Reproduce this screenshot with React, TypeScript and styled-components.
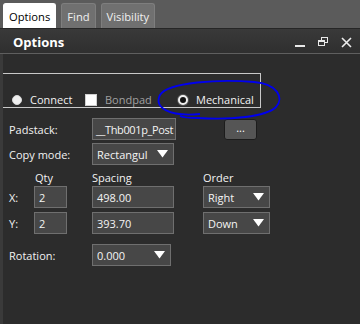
import React from "react";
import styled, { createGlobalStyle } from "styled-components";

const GlobalStyle = createGlobalStyle`
  html, body {
    margin: 0;
    padding: 0;
    background: #2c2c2c;
  }
  body {
    font-family: "Open Sans", "Noto Sans", "DejaVu Sans", sans-serif;
    font-size: 11px;
  }
`;

const Panel = styled.div`
  position: relative;
  width: 360px;
  height: 324px;
  display: flex;
  flex-direction: column;
  background: #2c2c2c;
  overflow: hidden;
`;

const TabBar = styled.div`
  display: flex;
  align-items: flex-end;
  gap: 5px;
  height: 29px;
  padding-left: 3px;
  box-sizing: border-box;
  background: #5b5b5b;
  border-bottom: 1px solid #262626;
`;

const Tab = styled.div<{ $active?: boolean }>`
  height: 25px;
  box-sizing: border-box;
  display: flex;
  align-items: center;
  padding: 0 5px;
  border-radius: 3px 3px 0 0;
  font-size: 11.2px;
  color: ${({ $active }) => ($active ? "#000" : "#f0f0f0")};
  background: ${({ $active }) => ($active ? "#ffffff" : "#707070")};
  border: 1px solid ${({ $active }) => ($active ? "#ffffff" : "#7e7e7e")};
  border-bottom: none;
`;

const Header = styled.div`
  height: 25px;
  box-sizing: border-box;
  display: flex;
  align-items: center;
  justify-content: space-between;
  padding: 2px 8px 0 13px;
  background: linear-gradient(#393939, #2f2f2f);
  border-bottom: 1px solid #5f5f5f;
  color: #ffffff;
  font-weight: 700;
  font-size: 13px;
`;

const HeaderIcons = styled.div`
  display: flex;
  align-items: center;
  gap: 12px;
`;

const Body = styled.div`
  flex: 1;
  display: flex;
  flex-direction: column;
  border-left: 3px solid #3a3a3a;
  padding-top: 19px;
  color: #f2f2f2;
`;

const GroupBox = styled.div`
  width: 258px;
  height: 35px;
  box-sizing: border-box;
  border: 1px solid #c9c9c9;
  border-left: none;
  display: flex;
  align-items: flex-end;
  padding: 0 0 0 9px;
  line-height: 14px;
`;

const Choice = styled.label<{ $muted?: boolean; $width: number }>`
  display: flex;
  align-items: center;
  gap: 8px;
  width: ${({ $width }) => $width}px;
  color: ${({ $muted }) => ($muted ? "#a0a0a0" : "#f2f2f2")};
  font-size: 11px;
`;

const Radio = styled.span<{ $checked?: boolean }>`
  width: 10px;
  height: 10px;
  border-radius: 50%;
  box-sizing: border-box;
  background: ${({ $checked }) => ($checked ? "#111" : "#f0f0f0")};
  border: ${({ $checked }) => ($checked ? "2px solid #f0f0f0" : "1px solid #d8d8d8")};
  box-shadow: ${({ $checked }) => ($checked ? "0 0 0 1px #555" : "none")};
`;

const Check = styled.span`
  width: 12px;
  height: 12px;
  background: #ffffff;
  border: 1px solid #d0d0d0;
  box-sizing: border-box;
`;

const Form = styled.div`
  display: flex;
  flex-direction: column;
  padding: 10px 0 0 6px;
`;

const Row = styled.div<{ $mt?: number }>`
  display: flex;
  align-items: center;
  margin-top: ${({ $mt }) => $mt ?? 0}px;
`;

const Label = styled.span<{ $width: number }>`
  width: ${({ $width }) => $width}px;
  flex-shrink: 0;
`;

const Field = styled.div<{ $width: number; $tight?: boolean }>`
  width: ${({ $width }) => $width}px;
  height: 22px;
  box-sizing: border-box;
  background: #474747;
  border: 1px solid #6f6f6f;
  display: flex;
  align-items: center;
  padding: 0 0 0 ${({ $tight }) => ($tight ? 3 : 4)}px;
  overflow: hidden;
  white-space: nowrap;
  color: #f4f4f4;
  font-size: 11px;
  letter-spacing: ${({ $tight }) => ($tight ? "-0.35px" : "0")};
`;

const Select = styled(Field)`
  justify-content: space-between;
  padding-right: 5px;
`;

const SelectText = styled.span`
  overflow: hidden;
  white-space: nowrap;
  flex: 1;
`;

const DotsButton = styled.div`
  margin-left: 48px;
  width: 33px;
  height: 21px;
  box-sizing: border-box;
  background: #555555;
  border: 1px solid #1c1c1c;
  border-radius: 3px;
  display: flex;
  align-items: center;
  justify-content: center;
  color: #ffffff;
  font-size: 11px;
  padding-bottom: 3px;
`;

const Grid = styled.div`
  display: grid;
  grid-template-columns: 25px 58px 111px 66px;
  row-gap: 4px;
  margin-top: 6px;
  align-items: center;
`;

const ColHead = styled.span<{ $pad?: number }>`
  padding-left: ${({ $pad }) => $pad ?? 0}px;
  line-height: 14px;
  margin-bottom: -3px;
`;

const Annotation = styled.svg`
  position: absolute;
  left: 150px;
  top: 74px;
  width: 140px;
  height: 50px;
  pointer-events: none;
`;

const Triangle = () => (
  <svg width="11" height="8" viewBox="0 0 11 8">
    <polygon points="0,0 11,0 5.5,7.5" fill="#ffffff" />
  </svg>
);

const Dropdown = ({ width, value }: { width: number; value: string }) => (
  <Select $width={width}>
    <SelectText>{value}</SelectText>
    <Triangle />
  </Select>
);

export default function App() {
  return (
    <Panel>
      <GlobalStyle />
      <TabBar>
        <Tab $active>Options</Tab>
        <Tab>Find</Tab>
        <Tab>Visibility</Tab>
      </TabBar>
      <Header>
        <span>Options</span>
        <HeaderIcons>
          <svg width="11" height="11" viewBox="0 0 11 11">
            <rect x="0" y="8" width="10" height="2" fill="#e8e8e8" />
          </svg>
          <svg width="11" height="11" viewBox="0 0 11 11">
            <rect x="3.5" y="0.5" width="6" height="5" fill="none" stroke="#e8e8e8" />
            <rect x="0.5" y="3.5" width="6" height="5" fill="#333" stroke="#e8e8e8" />
            <rect x="1" y="4" width="5" height="1" fill="#e8e8e8" />
          </svg>
          <svg width="11" height="11" viewBox="0 0 11 11">
            <path d="M1 1 L10 10 M10 1 L1 10" stroke="#ececec" strokeWidth="1.6" />
          </svg>
        </HeaderIcons>
      </Header>
      <Body>
        <GroupBox>
          <Choice $width={73}>
            <Radio />
            Connect
          </Choice>
          <Choice $width={93} $muted>
            <Check />
            Bondpad
          </Choice>
          <Choice $width={80}>
            <Radio $checked />
            Mechanical
          </Choice>
        </GroupBox>
        <Form>
          <Row>
            <Label $width={83}>Padstack:</Label>
            <Field $width={84} $tight>
              __Thb001p_Post
            </Field>
            <DotsButton>...</DotsButton>
          </Row>
          <Row $mt={3}>
            <Label $width={83}>Copy mode:</Label>
            <Dropdown width={82} value="Rectangul" />
          </Row>
          <Grid>
            <span />
            <ColHead $pad={1}>Qty</ColHead>
            <ColHead>Spacing</ColHead>
            <ColHead>Order</ColHead>
            <span>X:</span>
            <Field $width={33}>2</Field>
            <Field $width={82}>498.00</Field>
            <Dropdown width={67} value="Right" />
            <span>Y:</span>
            <Field $width={33}>2</Field>
            <Field $width={82}>393.70</Field>
            <Dropdown width={67} value="Down" />
          </Grid>
          <Row $mt={10}>
            <Label $width={83}>Rotation:</Label>
            <Dropdown width={79} value="0.000" />
          </Row>
        </Form>
      </Body>
      <Annotation viewBox="0 0 140 50">
        <path
          d="M50 40 C18 43 4 33 10 21 C18 8 70 5 104 8 C128 10 134 24 126 33 C116 43 80 46 48 44 C38 44 32 43 30 42"
          fill="none"
          stroke="#0000ee"
          strokeWidth="1.8"
        />
      </Annotation>
    </Panel>
  );
}
